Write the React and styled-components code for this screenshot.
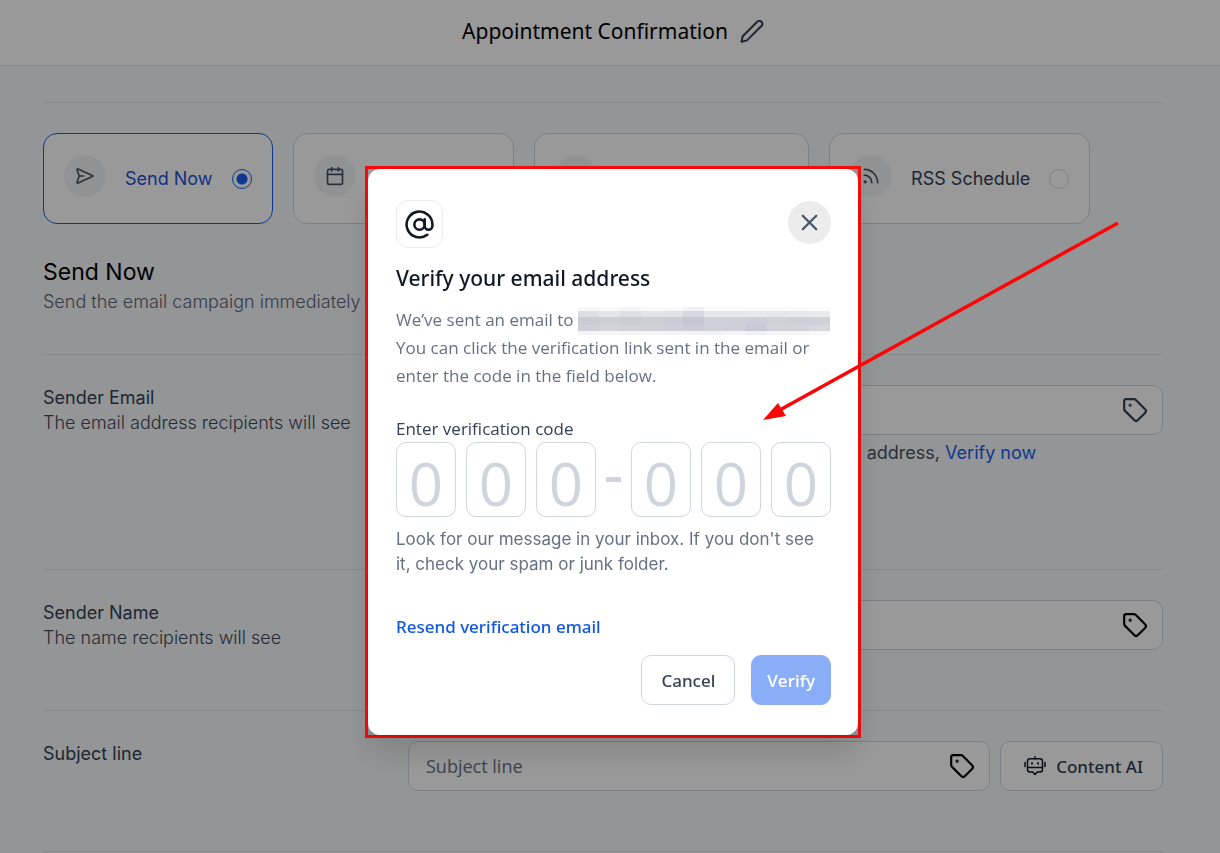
import React from 'react';
import styled, { createGlobalStyle } from 'styled-components';
import { AtSign, Calendar, Layers, Rss, Tag, X } from 'lucide-react';

const GlobalStyle = createGlobalStyle`
  * {
    box-sizing: border-box;
  }

  body {
    margin: 0;
    background-color: #f7f9fb;
    color: #344054;
    font-family: Inter, sans-serif;
    font-size: 18px;
    line-height: 25px;
  }

  button, input {
    font: inherit;
    color: inherit;
  }
`;

const openSans = `'Open Sans', sans-serif`;
const notoSans = `'Noto Sans', sans-serif`;

const Header = styled.header`
  display: flex;
  align-items: center;
  justify-content: center;
  gap: 12px;
  height: 66px;
  padding: 0 0 2px 6px;
  background-color: #fff;
  border-bottom: 1px solid #e4e7ec;
`;

const PageTitle = styled.h1`
  margin: 0;
  color: #000;
  font-family: ${notoSans};
  font-size: 21px;
  font-weight: 400;
`;

const IconButton = styled.button`
  display: flex;
  padding: 0;
  border: none;
  background: none;
  cursor: pointer;
`;

const Main = styled.main`
  padding: 36px 57px 0 43px;
`;

const Schedule = styled.section`
  padding: 30px 0 40px;
  border-top: 1px solid #dfe3e8;
`;

const Options = styled.div`
  display: flex;
  gap: 20px;
`;

const Option = styled.label`
  display: flex;
  align-items: center;
  gap: 19px;
  height: 91px;
  padding: 0 20px;
  border: 1px solid ${({ $active }) => ($active ? '#155eef' : '#d0d5dd')};
  border-radius: 14px;
  background-color: #fff;
  color: ${({ $active }) => ($active ? '#1f4fd8' : '#344054')};
  white-space: nowrap;
`;

const OptionIcon = styled.span`
  display: flex;
  align-items: center;
  justify-content: center;
  width: 42px;
  height: 42px;
  margin-bottom: 6px;
  border-radius: 50%;
  background-color: #f2f4f7;
  color: #475467;
`;

const Radio = styled.input`
  appearance: none;
  width: 20px;
  height: 20px;
  margin: 0;
  border: 1px solid #d0d5dd;
  border-radius: 50%;

  &:checked {
    border-color: #155eef;
    background: radial-gradient(circle, #155eef 5px, transparent 6px);
  }
`;

const SectionTitle = styled.h2`
  margin: 34px 0 3px;
  color: #000;
  font-size: 23px;
  font-weight: 400;
  line-height: 28px;
`;

const Muted = styled.p`
  margin: 0;
  color: ${({ $dark }) => ($dark ? '#3d495b' : '#5b6579')};
  font-weight: 300;
`;

const Row = styled.section`
  display: grid;
  grid-template-columns: 365px 1fr;
  padding: 30px 0 60px;
  border-top: 1px solid #dfe3e8;

  &:last-child {
    border-bottom: 1px solid #dfe3e8;
  }
`;

const FieldLabel = styled.label`
  display: block;
`;

const FieldLine = styled.div`
  display: flex;
  gap: 10px;
`;

const Field = styled.div`
  display: flex;
  flex: 1;
  align-items: center;
  height: 50px;
  padding: 0 14px 0 17px;
  border: 1px solid #d0d5dd;
  border-radius: 10px;
  background-color: #fff;
  color: ${({ $soft }) => ($soft ? '#344054' : '#000')};
`;

const FieldInput = styled.input`
  flex: 1;
  min-width: 0;
  border: none;
  outline: none;
  padding: 0;
  background: none;
  font-family: ${openSans};

  &::placeholder {
    color: #667085;
    opacity: 1;
  }
`;

const FieldHint = styled.p`
  margin: 5px 0 44px;
  color: #475467;
`;

const VerifyLink = styled.a`
  color: #155eef;
  text-decoration: none;
`;

const Button = styled.button`
  display: flex;
  align-items: center;
  justify-content: center;
  gap: 10px;
  height: 50px;
  padding: 0 19px;
  border: 1px solid #d0d5dd;
  border-radius: 10px;
  background-color: #fff;
  font-family: ${notoSans};
  font-size: 17px;
  font-weight: 500;
  white-space: nowrap;
  cursor: pointer;
`;

const AiButton = styled(Button)`
  padding: 0 19px 0 23px;
`;

const PrimaryButton = styled(Button)`
  padding: 0 15px;
  border-color: #8aadf8;
  background-color: #8aadf8;
  color: #fff;
  font-family: ${openSans};
  font-weight: 600;
`;

const Overlay = styled.div`
  position: fixed;
  inset: 0;
  display: flex;
  align-items: flex-start;
  justify-content: center;
  padding: 166px 0 0 6px;
  background-color: rgba(0, 0, 0, 0.4);
`;

const Highlight = styled.div`
  position: relative;
  width: 496px;
  border: 3px solid #f50c0c;
`;

const Arrow = styled.svg`
  position: absolute;
  top: 50px;
  left: 394px;
  pointer-events: none;
`;

const Modal = styled.div`
  padding: 31px 27px 30px 28px;
  border-radius: 12px;
  background-color: #fff;
  box-shadow: 0 20px 28px rgba(0, 0, 0, 0.12);
`;

const ModalTop = styled.div`
  display: flex;
  align-items: center;
  justify-content: space-between;
  margin-bottom: 16px;
`;

const ModalIcon = styled.div`
  display: flex;
  align-items: center;
  justify-content: center;
  width: 47px;
  height: 48px;
  border: 1px solid #eaecf0;
  border-radius: 12px;
  color: #101828;
`;

const CloseButton = styled(IconButton)`
  align-items: center;
  justify-content: center;
  width: 43px;
  height: 43px;
  margin-bottom: 4px;
  border-radius: 50%;
  background-color: #ececed;
  color: #475467;
`;

const ModalTitle = styled.h2`
  margin: 0 0 14px;
  color: #101828;
  font-family: ${notoSans};
  font-size: 21px;
  font-weight: 500;
  line-height: 28px;
`;

const ModalText = styled.p`
  margin: 0 0 26px;
  color: #667085;
  font-family: ${openSans};
  font-size: 17px;
  line-height: 28px;
`;

const CodeLabel = styled.label`
  display: block;
  margin-bottom: 1px;
  font-family: ${openSans};
  font-size: 17px;
`;

const CodeRow = styled.div`
  display: flex;
  align-items: center;
  gap: 10px;
  margin-bottom: 10px;
`;

const Digit = styled.input`
  flex: 1;
  min-width: 0;
  height: 75px;
  padding: 6px 0 0;
  border: 1px solid #d0d5dd;
  border-radius: 10px;
  font-family: ${openSans};
  font-size: 60px;
  text-align: center;

  &::placeholder {
    color: #d0d5dd;
    opacity: 1;
  }
`;

const Dash = styled.span`
  width: 15px;
  height: 5px;
  background-color: #d0d5dd;
`;

const CodeHelp = styled.p`
  margin: 0;
  color: #667085;
  font-size: 17px;
`;

const ResendLink = styled.a`
  display: block;
  margin: 37px 0 16px;
  color: #0f56e0;
  font-family: ${notoSans};
  font-size: 17px;
  font-weight: 500;
  text-decoration: none;
`;

const Actions = styled.div`
  display: flex;
  justify-content: flex-end;
  gap: 16px;
`;

const PencilIcon = () => (
  <svg width="24" height="24" viewBox="0 0 24 24" fill="none" stroke="#344054" strokeWidth="2" strokeLinecap="round" strokeLinejoin="round">
    <path d="M17.2 1.800a2.900 2.900 0 0 1 4.200 4.200L7 20.400 1.500 21.800l1.200-5.500z" />
  </svg>
);

const SendIcon = () => (
  <svg width="20" height="20" viewBox="0 0 24 24" fill="none" stroke="currentColor" strokeWidth="2" strokeLinecap="round" strokeLinejoin="round">
    <path d="M10.500 12H5.200M4.900 12.300 2.600 19.300c-.3 1.100-.1 1.600 1.100 1l17-7.600c1-.5 1-.9 0-1.400l-17-7.600c-1.200-.5-1.400-.1-1.100 1l2.300 7a1 1 0 0 1 0 .6z" />
  </svg>
);

const RobotIcon = () => (
  <svg width="22" height="20" viewBox="0 0 22 20" fill="none" stroke="#101828" strokeWidth="1.500" strokeLinecap="round" strokeLinejoin="round">
    <path d="M11 .8v2M1 6.500v4M21 6.500v4" />
    <path d="M6 2.800h10a2.500 2.500 0 0 1 2.500 2.500v8.200a2.500 2.500 0 0 1-2.500 2.500h-2.800L11 18.500 8.800 16H6a2.500 2.500 0 0 1-2.500-2.500V5.300A2.500 2.500 0 0 1 6 2.800z" />
    <path d="M3.500 11.500h15" />
    <path d="M8 6.800v1M14 6.800v1" strokeWidth="1.800" />
  </svg>
);

// obscured address, drawn as rows of coarse cells
const MASK_ROWS = [
  { height: 4, shades: ['#f8f8fa', '#fafafb', '#f5f5f8', '#fafafb', '#fafafb', '#f1f2f5', '#fbfbfc', '#fbfbfc', '#fbfbfc', '#fbfbfc', '#fbfbfc', '#fdfdfd'] },
  { height: 6, shades: ['#dcdee4', '#e4e5ea', '#dcdee4', '#e3e4e9', '#e1e2e8', '#d6d8e0', '#e6e7ec', '#e6e7ec', '#e7e8ec', '#e5e6eb', '#e7e8ec', '#e9eaee'] },
  { height: 8, shades: ['#caccd4', '#cdcfd7', '#caccd4', '#cdcfd7', '#cbcdd6', '#c5c8d3', '#cfd1d9', '#cdd0d8', '#cbcdd7', '#cfd1d9', '#cdcfd7', '#cfd1d9'] },
  { height: 6, shades: ['#cfd1d8', '#d2d4db', '#d0d2da', '#d0d2da', '#cdd0d8', '#cacdd7', '#cfd1d9', '#cdd0d8', '#c7cad6', '#d2d4dc', '#d2d4db', '#d6d8de'] },
  { height: 4, shades: ['#f4f4f7', '#f6f6f8', '#f4f4f7', '#f5f5f8', '#f2f3f6', '#f4f4f7', '#f0f1f5', '#f5f5f8', '#f1f2f6', '#f5f5f8', '#f5f5f8', '#f9f9fa'] },
];

const Mask = styled.span`
  display: inline-flex;
  flex-direction: column;
  width: 252px;
  margin: -4px -4px -4px 0;
  vertical-align: middle;
`;

const MaskRow = styled.span`
  display: flex;
  height: ${({ $height }) => $height}px;
`;

const MaskCell = styled.span`
  flex: 1;
  background-color: ${({ $shade }) => $shade};
`;

const OPTIONS = [
  { label: 'Send Now', icon: <SendIcon /> },
  { label: 'Schedule', icon: <Calendar size={20} strokeWidth={2} /> },
  { label: 'Batch Schedule', icon: <Layers size={20} strokeWidth={2} /> },
  { label: 'RSS Schedule', icon: <Rss size={20} strokeWidth={2} /> },
];

function TagButton() {
  return (
    <IconButton type="button" aria-label="Insert tag">
      <Tag size={26} strokeWidth={2} />
    </IconButton>
  );
}

function VerifyModal() {
  return (
    <Highlight>
      <Modal role="dialog" aria-labelledby="verify-title">
        <ModalTop>
          <ModalIcon><AtSign size={31} strokeWidth={2} /></ModalIcon>
          <CloseButton type="button" aria-label="Close"><X size={27} strokeWidth={2} /></CloseButton>
        </ModalTop>
        <ModalTitle id="verify-title">Verify your email address</ModalTitle>
        <ModalText>
          We’ve sent an email to{' '}
          <Mask>
            {MASK_ROWS.map((row, r) => (
              <MaskRow key={r} $height={row.height}>
                {row.shades.map((shade, i) => <MaskCell key={i} $shade={shade} />)}
              </MaskRow>
            ))}
          </Mask>
          <br />
          You can click the verification link sent in the email or enter the code in the field below.
        </ModalText>
        <CodeLabel htmlFor="code-0">Enter verification code</CodeLabel>
        <CodeRow>
          {[0, 1, 2].map((i) => <Digit key={i} id={`code-${i}`} aria-label={`Digit ${i + 1}`} placeholder="0" maxLength={1} />)}
          <Dash />
          {[3, 4, 5].map((i) => <Digit key={i} id={`code-${i}`} aria-label={`Digit ${i + 1}`} placeholder="0" maxLength={1} />)}
        </CodeRow>
        <CodeHelp>Look for our message in your inbox. If you don't see it, check your spam or junk folder.</CodeHelp>
        <ResendLink href="#resend">Resend verification email</ResendLink>
        <Actions>
          <Button type="button">Cancel</Button>
          <PrimaryButton type="button">Verify</PrimaryButton>
        </Actions>
      </Modal>
      <Arrow width="362" height="206" viewBox="0 0 362 206">
        <path d="M356 4 16 192" stroke="#fb0606" strokeWidth="3.500" />
        <path d="M1 201 16 184 24 197z" fill="#fb0606" />
      </Arrow>
    </Highlight>
  );
}

function App() {
  return (
    <>
      <GlobalStyle />
      <Header>
        <PageTitle>Appointment Confirmation</PageTitle>
        <IconButton type="button" aria-label="Rename"><PencilIcon /></IconButton>
      </Header>
      <Main>
        <Schedule>
          <Options>
            {OPTIONS.map(({ label, icon }, i) => (
              <Option key={label} $active={i === 0}>
                <OptionIcon>{icon}</OptionIcon>
                {label}
                <Radio type="radio" name="schedule" defaultChecked={i === 0} />
              </Option>
            ))}
          </Options>
          <SectionTitle>Send Now</SectionTitle>
          <Muted>Send the email campaign immediately</Muted>
        </Schedule>
        <Row>
          <div>
            <FieldLabel htmlFor="sender-email">Sender Email</FieldLabel>
            <Muted $dark>The email address recipients will see</Muted>
          </div>
          <div>
            <FieldLine>
              <Field $soft>
                <FieldInput id="sender-email" type="email" />
                <TagButton />
              </Field>
            </FieldLine>
            <FieldHint>
              Sending is paused because you have not verified this address,{' '}
              <VerifyLink href="#verify">Verify now</VerifyLink>
            </FieldHint>
          </div>
        </Row>
        <Row>
          <div>
            <FieldLabel htmlFor="sender-name">Sender Name</FieldLabel>
            <Muted $dark>The name recipients will see</Muted>
          </div>
          <FieldLine>
            <Field>
              <FieldInput id="sender-name" />
              <TagButton />
            </Field>
          </FieldLine>
        </Row>
        <Row>
          <FieldLabel htmlFor="subject">Subject line</FieldLabel>
          <FieldLine>
            <Field>
              <FieldInput id="subject" placeholder="Subject line" />
              <TagButton />
            </Field>
            <AiButton type="button"><RobotIcon />Content AI</AiButton>
          </FieldLine>
        </Row>
      </Main>
      <Overlay>
        <VerifyModal />
      </Overlay>
    </>
  );
}

export default App;
